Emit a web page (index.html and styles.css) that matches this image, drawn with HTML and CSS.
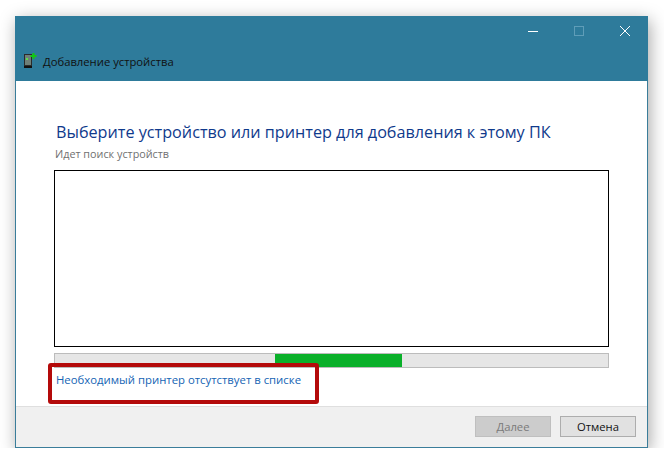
FILE: index.html
```html
<!DOCTYPE html>
<html lang="ru">
<head>
  <meta charset="UTF-8" />
  <title>Добавление устройства</title>
  <link rel="stylesheet" href="styles.css">
</head>
<body>
  <div class="window">
    <div class="titlebar">
      <div class="controls">
        <span class="ctl"><svg width="10" height="10" viewBox="0 0 10 10"><path d="M0 5.5H10" stroke="#fff" stroke-width="1"/></svg></span>
        <span class="ctl"><svg width="10" height="10" viewBox="0 0 10 10"><rect x="0.5" y="0.5" width="9" height="9" fill="none" stroke="#5f9db8"/></svg></span>
        <span class="ctl"><svg width="10" height="10" viewBox="0 0 10 10"><path d="M0 0L10 10M10 0L0 10" stroke="#fff" stroke-width="1"/></svg></span>
      </div>
      <div class="caption">
        <svg class="app-icon" width="14" height="16" viewBox="0 0 14 16">
          <rect x="0" y="1" width="8" height="14" fill="#2b2b2b"/>
          <rect x="1" y="2" width="6" height="10" fill="#6f7f78"/>
          <rect x="2" y="5" width="2" height="2" fill="#5fe04a"/>
          <rect x="0" y="13" width="8" height="2" fill="#111"/>
          <path d="M9.5 0V6M6.5 3H12.5" stroke="#12c912" stroke-width="2"/>
        </svg>
        <span>Добавление устройства</span>
      </div>
    </div>
    <div class="content">
      <h1>Выберите устройство или принтер для добавления к этому ПК</h1>
      <p class="status">Идет поиск устройств</p>
      <div class="device-list"></div>
      <div class="progress"><div class="progress-fill"></div></div>
      <a class="link" href="#">Необходимый принтер отсутствует в списке</a>
    </div>
    <div class="footer">
      <button class="btn" disabled>Далее</button>
      <button class="btn">Отмена</button>
    </div>
    <div class="highlight"></div>
  </div>
</body>
</html>
```

FILE: styles.css
```css
body {
  margin: 0;
  padding: 16px 16px 0 15px;
  background: #fff;
  font-family: "Open Sans", "Noto Sans", sans-serif;
}
.window {
  position: relative;
  width: 631px;
  height: 431px;
  border: 1px solid #3a7d9a;
  border-top: none;
  background: #fff;
  display: flex;
  flex-direction: column;
  box-shadow: 2px 4px 16px rgba(0,0,0,0.35);
}
.titlebar {
  height: 65px;
  margin: 0 -1px;
  background: #2e7b9b;
  flex: none;
}
.controls {
  display: flex;
  justify-content: flex-end;
  height: 30px;
}
.ctl {
  width: 46px;
  display: flex;
  align-items: center;
  justify-content: center;
}
.caption {
  display: flex;
  align-items: center;
  gap: 5px;
  padding: 7px 0 0 9px;
  font-size: 11.25px;
  color: #111;
}
.content {
  flex: 1;
  padding: 0 38px;
}
h1 {
  margin: 39px 0 0 2px;
  font-size: 16.2px;
  font-weight: 400;
  line-height: 24px;
  color: #0f3a8c;
  white-space: nowrap;
}
.status {
  margin: 3px 0 9px 1px;
  font-size: 10.8px;
  line-height: 14px;
  color: #707070;
}
.device-list {
  height: 175px;
  border: 1px solid #000;
}
.progress {
  height: 13px;
  margin-top: 6px;
  border: 1px solid #bcbcbc;
  background: #e6e6e6;
  padding-left: 220px;
}
.progress-fill {
  width: 127px;
  height: 100%;
  background: #0ab02a;
}
.link {
  display: block;
  margin: 4px 0 0 2px;
  font-size: 11.35px;
  line-height: 16px;
  color: #1464b4;
  text-decoration: none;
}
.footer {
  height: 31px;
  flex: none;
  display: flex;
  justify-content: flex-end;
  align-items: flex-start;
  gap: 9px;
  padding: 9px 11px 0 0;
  background: #f0f0f0;
  border-top: 1px solid #dfdfdf;
}
.btn {
  width: 76px;
  height: 21px;
  padding: 0;
  border: 1px solid #adadad;
  background: #e1e1e1;
  font-family: inherit;
  font-size: 11.25px;
  color: #111;
}
.btn:disabled {
  background: #cccccc;
  border-color: #bfbfbf;
  color: #7a7a7a;
}
.highlight {
  position: absolute;
  left: 32px;
  top: 347px;
  width: 263px;
  height: 33px;
  border: 4px solid #b40a0a;
  border-radius: 3px;
}
```
